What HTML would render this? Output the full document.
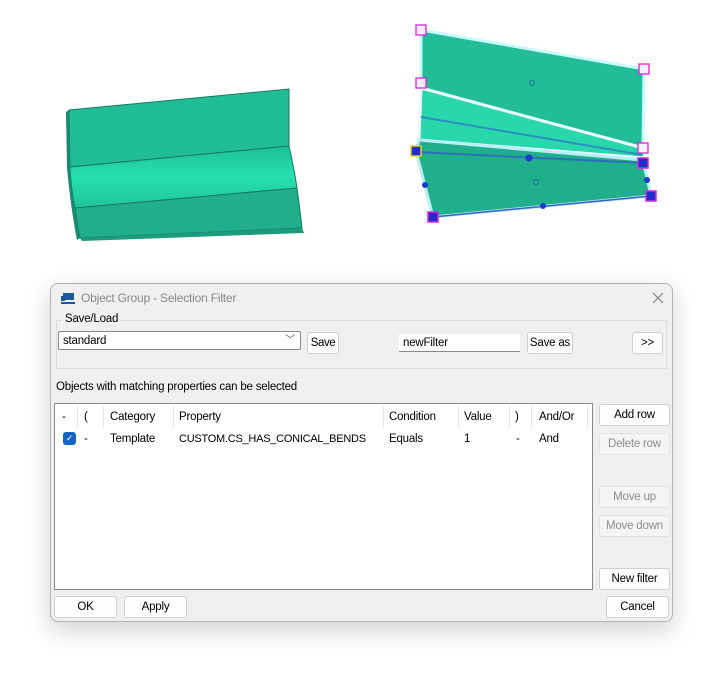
<!DOCTYPE html><html><head><style>
body{margin:0;width:710px;height:673px;background:#fff;position:relative;overflow:hidden;font-family:"Liberation Sans",sans-serif;font-size:11.5px;letter-spacing:-0.2px;color:#000}
.a{position:absolute}
.dlg{left:50px;top:283px;width:621px;height:337px;background:#f0f0f0;border:1px solid #b4b4b4;border-radius:8px;box-shadow:0 8px 24px rgba(0,0,0,.18)}
.btn{position:absolute;background:#fdfdfd;border:1px solid #d0d0d0;border-radius:3px;text-align:center;box-sizing:border-box;line-height:21px;white-space:nowrap}
.dis{color:#8c8c8c;background:#f5f5f5;border-color:#e2e2e2}
.th{position:absolute;top:7px;white-space:nowrap}
.sep{position:absolute;top:2px;width:1px;height:22px;background:#e6e6e6}
</style></head><body>
<svg class="a" style="left:0;top:0" width="710" height="280">
<defs><linearGradient id="g1" x1="0" y1="0" x2="0" y2="1"><stop offset="0" stop-color="#1fbf98"/><stop offset=".5" stop-color="#27e0b2"/><stop offset="1" stop-color="#20c39c"/></linearGradient></defs>
<path d="M69,110 L289,89 L289,146 L70,167 Z" fill="#21bd97" stroke="#167a63" stroke-width="1"/>
<path d="M70,167 L289,146 Q294,168 297,188 L75,208 Q71,190 70,167 Z" fill="url(#g1)" stroke="#167a63" stroke-width="1"/>
<path d="M75,208 L297,188 Q300,210 302,228 L80,238 Q77,222 75,208 Z" fill="#20ae8b" stroke="#167a63" stroke-width="1"/>
<polygon points="80,238 302,228 304,233 82,241" fill="#1c9c7d"/>
<path d="M66,112 L69,110 L70,167 Q71,190 75,208 Q77,222 80,238 L77,240 Q71,210 67,168 Z" fill="#178a6f"/>
<polygon points="421,30 644,69 643,148 421,88" fill="#22bd98" stroke="#c8fbff" stroke-width="3"/>
<polygon points="421,88 643,148 643,158 419,140" fill="#2ad7ad" stroke="#e8fdff" stroke-width="3"/>
<line x1="421" y1="117" x2="643" y2="155" stroke="#2b8fbf" stroke-width="2"/>
<polygon points="419,140 643,160 651,196 433,217 416,151" fill="#20ae8b" stroke="#b8eef5" stroke-width="3"/>
<line x1="416" y1="152" x2="643" y2="163" stroke="#2d6fb8" stroke-width="2"/>
<line x1="433" y1="217" x2="651" y2="196" stroke="#3b62c0" stroke-width="1.5"/>
<g stroke="#e020e0" stroke-width="1.3" fill="#f0f0ff"><rect x="416" y="25" width="10" height="10"/><rect x="639" y="64" width="10" height="10"/><rect x="416" y="78" width="10" height="10"/><rect x="638" y="143" width="10" height="10"/></g>
<g fill="#1e2fc8" stroke="#e020e0" stroke-width="1.5"><rect x="638" y="158" width="10" height="10"/><rect x="646" y="191" width="10" height="10"/><rect x="428" y="212" width="10" height="10"/></g>
<rect x="411" y="146" width="10" height="10" fill="#1e2fc8" stroke="#e8d020" stroke-width="1.5"/>
<g fill="#1d3bd0"><circle cx="529" cy="158" r="3.5"/><circle cx="425" cy="185" r="3"/><circle cx="647" cy="180" r="3"/><circle cx="543" cy="206" r="3"/></g>
<circle cx="532" cy="83" r="2.5" fill="none" stroke="#1a7090"/><circle cx="536" cy="182" r="2.5" fill="none" stroke="#1a7090"/>
</svg>
<div class="a dlg">
<svg class="a" style="left:9px;top:8px" width="16" height="14"><rect x="3" y="1" width="11" height="7" fill="#1c5a96"/><rect x="1" y="10" width="14" height="2" fill="#1c5a96"/><rect x="1" y="4" width="4" height="5" fill="#1c5a96"/></svg>
<div class="a" style="left:30px;top:7px;color:#888;font-size:12px">Object Group - Selection Filter</div>
<svg class="a" style="left:601px;top:8px" width="12" height="12"><path d="M1,1 L11,11 M11,1 L1,11" stroke="#777" stroke-width="1"/></svg>
<div class="a" style="left:5px;top:36px;width:609px;height:47px;border:1px solid #dcdcdc"></div>
<div class="a" style="left:11px;top:29px;background:#f0f0f0;padding:0 3px">Save/Load</div>
<div class="a" style="left:7px;top:47px;width:243px;height:19px;background:#fff;border:1px solid #8a8a8a;border-radius:2px;box-sizing:border-box;padding-left:4px;line-height:18px">standard<span style="position:absolute;right:5px;top:0;color:#555;font-size:10px">﹀</span></div>
<div class="btn" style="left:256px;top:48px;width:32px;height:22px;letter-spacing:-0.4px">Save</div>
<div class="a" style="left:348px;top:50px;width:121px;height:18px;background:#fff;border-bottom:1px solid #888;box-sizing:border-box;padding-left:4px;line-height:18px">newFilter</div>
<div class="btn" style="left:476px;top:48px;width:46px;height:22px">Save as</div>
<div class="btn" style="left:581px;top:48px;width:31px;height:22px">&gt;&gt;</div>
<div class="a" style="left:5px;top:97px">Objects with matching properties can be selected</div>
<div class="a" style="left:3px;top:119px;width:539px;height:187px;background:#fff;border:1px solid #888;box-sizing:border-box">
<div class="th" style="left:7px">-</div><div class="th" style="left:29px">(</div><div class="th" style="left:55px">Category</div><div class="th" style="left:124px">Property</div><div class="th" style="left:334px">Condition</div><div class="th" style="left:409px">Value</div><div class="th" style="left:460px">)</div><div class="th" style="left:484px">And/Or</div>
<div class="sep" style="left:22px"></div><div class="sep" style="left:48px"></div><div class="sep" style="left:118px"></div><div class="sep" style="left:328px"></div><div class="sep" style="left:403px"></div><div class="sep" style="left:454px"></div><div class="sep" style="left:476px"></div><div class="sep" style="left:532px"></div>
<div class="a" style="left:8px;top:28px;width:13px;height:13px;background:#1565c0;border-radius:3px;color:#fff;font-size:9px;line-height:13px;text-align:center">✓</div>
<div class="th" style="left:29px;top:29px">-</div><div class="th" style="left:55px;top:29px">Template</div><div class="th" style="left:124px;top:29px;font-size:11px;letter-spacing:-0.25px">CUSTOM.CS_HAS_CONICAL_BENDS</div><div class="th" style="left:334px;top:29px">Equals</div><div class="th" style="left:409px;top:29px">1</div><div class="th" style="left:461px;top:29px">-</div><div class="th" style="left:484px;top:29px">And</div>
</div>
<div class="btn" style="left:548px;top:120px;width:71px;height:22px">Add row</div>
<div class="btn dis" style="left:548px;top:149px;width:71px;height:22px">Delete row</div>
<div class="btn dis" style="left:548px;top:202px;width:71px;height:22px">Move up</div>
<div class="btn dis" style="left:548px;top:231px;width:71px;height:22px">Move down</div>
<div class="btn" style="left:548px;top:284px;width:71px;height:22px">New filter</div>
<div class="btn" style="left:3px;top:312px;width:63px;height:22px">OK</div>
<div class="btn" style="left:73px;top:312px;width:63px;height:22px">Apply</div>
<div class="btn" style="left:555px;top:312px;width:63px;height:22px">Cancel</div>
</div>
</body></html>
